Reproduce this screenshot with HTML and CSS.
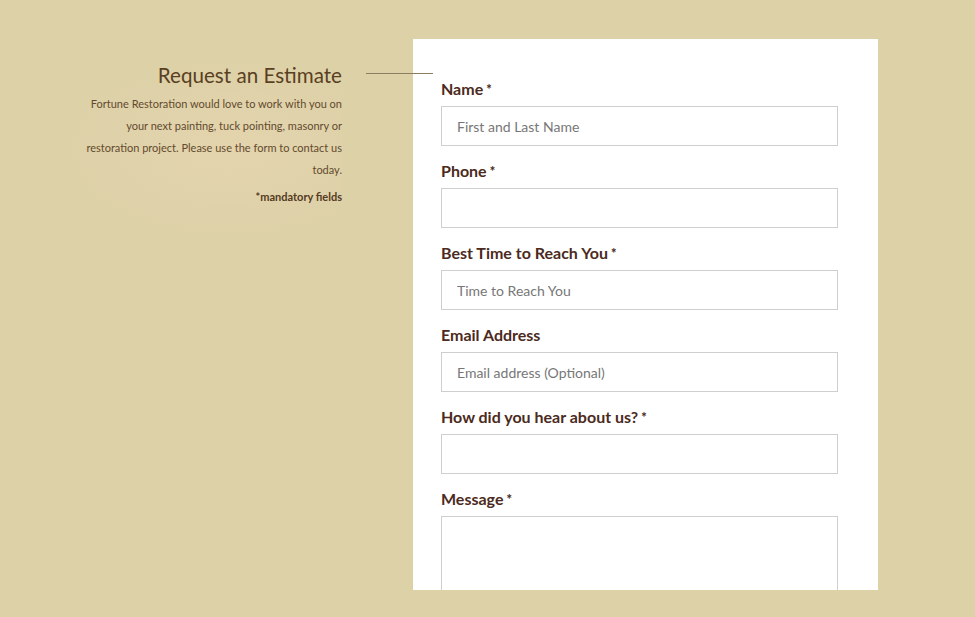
FILE: index.html
```html
<!DOCTYPE html>
<html>
<head>
<meta charset="utf-8">
<link rel="stylesheet" href="styles.css">
</head>
<body>
<div class="page">
  <aside class="intro">
    <h1 class="intro-title">Request an Estimate</h1>
    <p class="intro-text">Fortune Restoration would love to work with you on<br>your next painting, tuck pointing, masonry or<br>restoration project. Please use the form to contact us<br>today.</p>
    <p class="intro-note">*mandatory fields</p>
    <span class="intro-rule"></span>
  </aside>
  <form class="card">
    <div class="field">
      <label class="label">Name<span class="req">*</span></label>
      <input class="input" type="text" placeholder="First and Last Name">
    </div>
    <div class="field">
      <label class="label">Phone<span class="req">*</span></label>
      <input class="input" type="text">
    </div>
    <div class="field">
      <label class="label">Best Time to Reach You<span class="req">*</span></label>
      <input class="input" type="text" placeholder="Time to Reach You">
    </div>
    <div class="field">
      <label class="label">Email Address</label>
      <input class="input" type="text" placeholder="Email address (Optional)">
    </div>
    <div class="field">
      <label class="label">How did you hear about us?<span class="req">*</span></label>
      <input class="input" type="text">
    </div>
    <div class="field">
      <label class="label">Message<span class="req">*</span></label>
      <textarea class="input textarea"></textarea>
    </div>
  </form>
</div>
</body>
</html>
```
FILE: styles.css
```css
html, body {
  margin: 0;
  padding: 0;
  height: 100%;
  overflow: hidden;
}
body {
  background: #ddd1a8;
  font-family: Lato, "Open Sans", Arial, sans-serif;
}
.page {
  display: flex;
  gap: 71px;
  padding-top: 39px;
}
.intro {
  position: relative;
  width: 342px;
  flex: none;
  text-align: right;
  color: #5b3f24;
  padding: 24px 0 40px;
  background: radial-gradient(ellipse 170px 90px at 230px 110px, rgba(232, 214, 176, 0.6), rgba(232, 214, 176, 0));
}
.intro-title {
  margin: 0;
  font-size: 20.6px;
  line-height: 24px;
  font-weight: 400;
  color: #5a3f22;
}
.intro-text {
  margin: 6px 0 0;
  font-size: 11px;
  line-height: 22px;
  color: #634a2e;
}
.intro-note {
  margin: 7px 0 0;
  font-size: 11px;
  line-height: 18px;
  font-weight: 700;
  color: #553a22;
}
.intro-rule {
  position: absolute;
  left: 366px;
  top: 34px;
  width: 67px;
  height: 1px;
  background: #8b7e62;
  z-index: 2;
}
.card {
  width: 465px;
  height: 551px;
  box-sizing: border-box;
  background: #fff;
  padding: 41px 40px 0 28px;
  overflow: hidden;
  display: flex;
  flex-direction: column;
  gap: 16px;
}
.field {
  display: flex;
  flex-direction: column;
  gap: 8px;
}
.label {
  display: block;
  height: 18px;
  font-size: 16px;
  line-height: 18px;
  font-weight: 700;
  color: #4b2a20;
}
.req {
  margin-left: 3px;
  font-size: 13px;
  line-height: 0;
  font-weight: 900;
  position: relative;
  top: -1px;
}
.input {
  display: block;
  width: 397px;
  height: 40px;
  box-sizing: border-box;
  border: 1px solid #cfcfcf;
  background: #fff;
  padding: 0 15px;
  font-family: Lato, "Open Sans", Arial, sans-serif;
  font-size: 14px;
  color: #333;
  outline: none;
  margin: 0;
}
.input::placeholder {
  color: #777;
}
.textarea {
  height: 110px;
  resize: none;
}
```
